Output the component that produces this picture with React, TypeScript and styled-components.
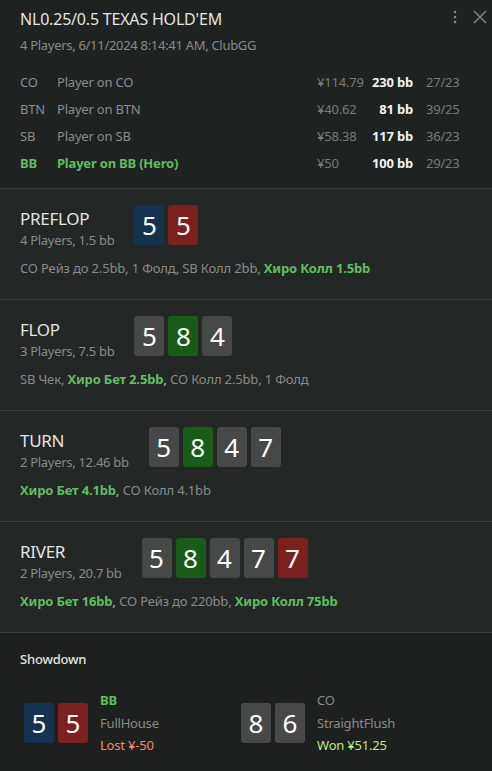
import styled, { createGlobalStyle } from 'styled-components';

const GlobalStyle = createGlobalStyle`
  html, body {
    margin: 0;
    padding: 0;
    background: #232726;
  }
  body {
    font-family: "Noto Sans", "Open Sans", sans-serif;
  }
`;

type Suit = 'blue' | 'red' | 'green' | 'grey';

interface CardData {
  rank: string;
  suit: Suit;
}

interface Player {
  pos: string;
  name: string;
  stack: string;
  bb: string;
  ratio: string;
  hero?: boolean;
}

interface ActionPart {
  text: string;
  hero?: boolean;
}

interface Street {
  name: string;
  info: string;
  cards: CardData[];
  actions: ActionPart[];
}

const suitColors: Record<Suit, string> = {
  blue: '#143350',
  red: '#7b1f1f',
  green: '#195c19',
  grey: '#474848',
};

const players: Player[] = [
  { pos: 'CO', name: 'Player on CO', stack: '¥114.79', bb: '230 bb', ratio: '27/23' },
  { pos: 'BTN', name: 'Player on BTN', stack: '¥40.62', bb: '81 bb', ratio: '39/25' },
  { pos: 'SB', name: 'Player on SB', stack: '¥58.38', bb: '117 bb', ratio: '36/23' },
  { pos: 'BB', name: 'Player on BB (Hero)', stack: '¥50', bb: '100 bb', ratio: '29/23', hero: true },
];

const board: CardData[] = [
  { rank: '5', suit: 'grey' },
  { rank: '8', suit: 'green' },
  { rank: '4', suit: 'grey' },
  { rank: '7', suit: 'grey' },
  { rank: '7', suit: 'red' },
];

const streets: Street[] = [
  {
    name: 'PREFLOP',
    info: '4 Players, 1.5 bb',
    cards: [{ rank: '5', suit: 'blue' }, { rank: '5', suit: 'red' }],
    actions: [
      { text: 'CO Рейз до 2.5bb, 1 Фолд, SB Колл 2bb, ' },
      { text: 'Хиро Колл 1.5bb', hero: true },
    ],
  },
  {
    name: 'FLOP',
    info: '3 Players, 7.5 bb',
    cards: board.slice(0, 3),
    actions: [
      { text: 'SB Чек, ' },
      { text: 'Хиро Бет 2.5bb,', hero: true },
      { text: ' CO Колл 2.5bb, 1 Фолд' },
    ],
  },
  {
    name: 'TURN',
    info: '2 Players, 12.46 bb',
    cards: board.slice(0, 4),
    actions: [
      { text: 'Хиро Бет 4.1bb,', hero: true },
      { text: ' CO Колл 4.1bb' },
    ],
  },
  {
    name: 'RIVER',
    info: '2 Players, 20.7 bb',
    cards: board,
    actions: [
      { text: 'Хиро Бет 16bb,', hero: true },
      { text: ' CO Рейз до 220bb, ' },
      { text: 'Хиро Колл 75bb', hero: true },
    ],
  },
];

const Page = styled.div`
  width: 492px;
  min-height: 771px;
  background: #232726;
  color: #8c8c8c;
`;

const Header = styled.header`
  background: #1e2220;
  padding: 8px 20px 12px;
  border-bottom: 1px solid #3a3d3c;
`;

const TitleRow = styled.div`
  display: flex;
  align-items: center;
  justify-content: space-between;
`;

const Title = styled.h1`
  margin: 0;
  font-size: 16px;
  font-weight: 400;
  line-height: 22px;
  letter-spacing: -0.2px;
  color: #e4e4e4;
`;

const IconGroup = styled.div`
  display: flex;
  align-items: center;
  gap: 15px;
  margin-right: -16px;
  margin-top: -4px;
  color: #8a8a8a;
`;

const Subtitle = styled.div`
  font-size: 13px;
  line-height: 18px;
  letter-spacing: -0.3px;
  margin-top: 6px;
  color: #8a8a8a;
`;

const PlayerTable = styled.div`
  display: grid;
  grid-template-columns: 37px 1fr 52px 44px 59px;
  grid-auto-rows: 27px;
  align-items: center;
  margin-top: 14px;
  font-size: 13px;
  letter-spacing: -0.2px;
`;

const Cell = styled.div<{ $hero?: boolean; $tone?: 'dim' | 'bright' }>`
  white-space: nowrap;
  color: ${({ $hero, $tone }) =>
    $hero ? '#5fbf5f' : $tone === 'bright' ? '#f2f2f2' : $tone === 'dim' ? '#7a7a7a' : '#8c8c8c'};
  font-weight: ${({ $hero, $tone }) => ($hero || $tone === 'bright' ? 700 : 400)};
`;

const BbCell = styled(Cell)`
  justify-self: end;
`;

const RatioCell = styled(Cell)`
  padding-left: 13px;
`;

const StreetSection = styled.section`
  padding: 16px 20px 22px;
  border-bottom: 1px solid #3a3d3c;
  &:last-of-type {
    border-bottom: none;
  }
`;

const StreetHead = styled.div`
  display: flex;
  align-items: flex-start;
  gap: 20px;
`;

const StreetTitle = styled.div`
  display: flex;
  flex-direction: column;
  padding-top: 2px;
`;

const StreetName = styled.div`
  font-size: 17px;
  line-height: 24px;
  letter-spacing: -0.3px;
  color: #e4e4e4;
`;

const StreetInfo = styled.div`
  font-size: 13px;
  line-height: 18px;
  letter-spacing: -0.3px;
  color: #8a8a8a;
`;

const Cards = styled.div`
  display: flex;
  gap: 4px;
`;

const Card = styled.div<{ $suit: Suit }>`
  width: 30px;
  height: 40px;
  border-radius: 3px;
  background: ${({ $suit }) => suitColors[$suit]};
  color: #ffffff;
  font-size: 26px;
  line-height: 40px;
  text-align: center;
`;

const Actions = styled.div`
  margin-top: 10px;
  font-size: 13px;
  line-height: 18px;
  letter-spacing: -0.15px;
  color: #8a8a8a;
`;

const ActionText = styled.span<{ $hero?: boolean }>`
  color: ${({ $hero }) => ($hero ? '#5fbf5f' : '#8a8a8a')};
  font-weight: ${({ $hero }) => ($hero ? 700 : 400)};
`;

const Showdown = styled.section`
  background: #1d201e;
  padding: 17px 20px 13px;
  margin-bottom: 3px;
`;

const ShowdownTitle = styled.div`
  font-size: 13px;
  font-weight: 500;
  line-height: 18px;
  letter-spacing: -0.2px;
  color: #e4e4e4;
`;

const Hands = styled.div`
  display: grid;
  grid-template-columns: 217px 1fr;
  margin-top: 21px;
  padding-left: 4px;
`;

const Hand = styled.div`
  display: flex;
  align-items: center;
  gap: 12px;
`;

const HandInfo = styled.div`
  display: flex;
  flex-direction: column;
  font-size: 13px;
  line-height: 22.5px;
  letter-spacing: -0.2px;
`;

const HandLine = styled.div<{ $color: string; $bold?: boolean }>`
  color: ${({ $color }) => $color};
  font-weight: ${({ $bold }) => ($bold ? 700 : 400)};
`;

function MoreIcon() {
  return (
    <svg width="4" height="14" viewBox="0 0 4 14" fill="currentColor">
      <circle cx="2" cy="2" r="1.3" />
      <circle cx="2" cy="7" r="1.3" />
      <circle cx="2" cy="12" r="1.3" />
    </svg>
  );
}

function CloseIcon() {
  return (
    <svg width="16" height="16" viewBox="0 0 16 16" stroke="currentColor" strokeWidth="1.4">
      <path d="M2 2 L14 14 M14 2 L2 14" />
    </svg>
  );
}

function CardRow({ cards }: { cards: CardData[] }) {
  return (
    <Cards>
      {cards.map((c, i) => (
        <Card key={i} $suit={c.suit}>{c.rank}</Card>
      ))}
    </Cards>
  );
}

export default function App() {
  return (
    <Page>
      <GlobalStyle />
      <Header>
        <TitleRow>
          <Title>NL0.25/0.5 TEXAS HOLD'EM</Title>
          <IconGroup>
            <MoreIcon />
            <CloseIcon />
          </IconGroup>
        </TitleRow>
        <Subtitle>4 Players, 6/11/2024 8:14:41 AM, ClubGG</Subtitle>
        <PlayerTable>
          {players.map((p) => [
            <Cell key={p.pos + 'pos'} $hero={p.hero}>{p.pos}</Cell>,
            <Cell key={p.pos + 'name'} $hero={p.hero}>{p.name}</Cell>,
            <Cell key={p.pos + 'stack'} $tone="dim">{p.stack}</Cell>,
            <BbCell key={p.pos + 'bb'} $tone="bright">{p.bb}</BbCell>,
            <RatioCell key={p.pos + 'ratio'} $tone="dim">{p.ratio}</RatioCell>,
          ])}
        </PlayerTable>
      </Header>

      {streets.map((s) => (
        <StreetSection key={s.name}>
          <StreetHead>
            <StreetTitle>
              <StreetName>{s.name}</StreetName>
              <StreetInfo>{s.info}</StreetInfo>
            </StreetTitle>
            <CardRow cards={s.cards} />
          </StreetHead>
          <Actions>
            {s.actions.map((a, i) => (
              <ActionText key={i} $hero={a.hero}>{a.text}</ActionText>
            ))}
          </Actions>
        </StreetSection>
      ))}

      <Showdown>
        <ShowdownTitle>Showdown</ShowdownTitle>
        <Hands>
          <Hand>
            <CardRow cards={[{ rank: '5', suit: 'blue' }, { rank: '5', suit: 'red' }]} />
            <HandInfo>
              <HandLine $color="#5fbf5f" $bold>BB</HandLine>
              <HandLine $color="#8a8a8a">FullHouse</HandLine>
              <HandLine $color="#f08a78">Lost ¥-50</HandLine>
            </HandInfo>
          </Hand>
          <Hand>
            <CardRow cards={[{ rank: '8', suit: 'grey' }, { rank: '6', suit: 'grey' }]} />
            <HandInfo>
              <HandLine $color="#8a8a8a">CO</HandLine>
              <HandLine $color="#8a8a8a">StraightFlush</HandLine>
              <HandLine $color="#b8e986">Won ¥51.25</HandLine>
            </HandInfo>
          </Hand>
        </Hands>
      </Showdown>
    </Page>
  );
}
